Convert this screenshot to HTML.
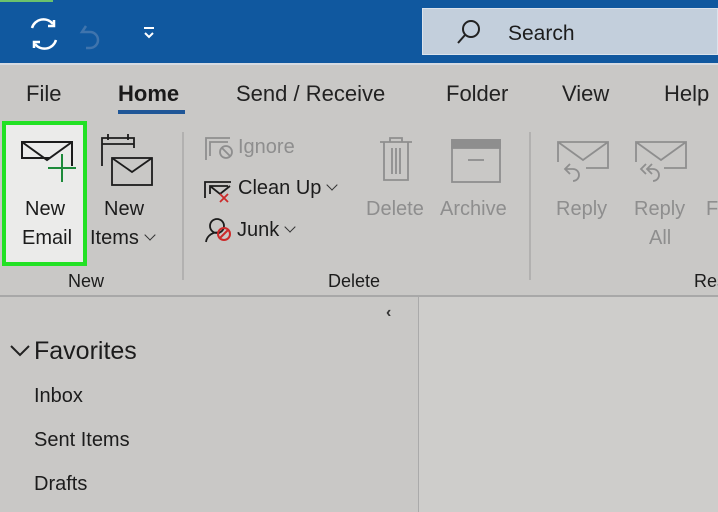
<!DOCTYPE html>
<html><head><style>
body{margin:0;width:718px;height:512px;overflow:hidden;background:#c9c8c6;font-family:"Liberation Sans",sans-serif;position:relative}
.a{position:absolute;white-space:nowrap}
.t{font-size:22px;color:#222}
.r{font-size:20px;color:#1c1c1c}
.g{font-size:20px;color:#8e8e8e}
.c{display:inline-block;width:7px;height:7px;border-right:1.6px solid #333;border-bottom:1.6px solid #333;transform:rotate(45deg);margin-left:7px;vertical-align:5px}
</style></head><body>
<div class="a" style="left:0;top:0;width:718px;height:63px;background:#10589f"></div>
<div class="a" style="left:0;top:0;width:53px;height:2px;background:#6cc26c"></div>
<div class="a" style="left:0;top:63px;width:718px;height:2px;background:#d6dbe2"></div>
<div class="a" style="left:422px;top:8px;width:296px;height:47px;background:#c3cfdc;border:1px solid #dbe3ec;box-sizing:border-box"></div>
<svg class="a" style="left:0;top:0" width="718" height="63">
<g fill="none" stroke="#fff" stroke-width="2.5">
<path d="M32 28a12 12 0 0 1 21-4"/><path d="M56 40a12 12 0 0 1-21 4"/>
<path d="M54 20v6h-6"/><path d="M34 48v-6h6"/>
</g>
<path d="M86 26l-4 6h8a8 8 0 0 1 0 16h-4" fill="none" stroke="#3f74ad" stroke-width="2.5"/>
<path d="M144 28h10M145 33l4 4 4-4" fill="none" stroke="#fff" stroke-width="2"/>
<circle cx="471" cy="29" r="8" fill="none" stroke="#222" stroke-width="2"/>
<path d="M465 35l-7 8" stroke="#222" stroke-width="2"/>
</svg>
<div class="a r" style="left:508px;top:22px;font-size:21px">Search</div>
<div class="a t" style="left:26px;top:81px">File</div>
<div class="a t" style="left:118px;top:81px;font-weight:bold;color:#1a1a1a">Home</div>
<div class="a" style="left:118px;top:110px;width:67px;height:4px;background:#1f5697"></div>
<div class="a t" style="left:236px;top:81px">Send / Receive</div>
<div class="a t" style="left:446px;top:81px">Folder</div>
<div class="a t" style="left:562px;top:81px">View</div>
<div class="a t" style="left:664px;top:81px">Help</div>
<div class="a" style="left:2px;top:121px;width:85px;height:145px;border:4px solid #22e124;box-sizing:border-box;background:#ebebea"></div>
<svg class="a" style="left:0;top:120px" width="718" height="180">
<g fill="none" stroke="#1c1c1c" stroke-width="2">
<path d="M50 38H22V22h50v24M22 22l25 18 25-18"/>
</g>
<path d="M62 34v28M48 48h28" stroke="#1d8a3a" stroke-width="2"/>
<g fill="none" stroke="#1c1c1c" stroke-width="1.8">
<path d="M102 46V18h32v10M102 24h32M108 14v6M128 14v6"/>
<rect x="112" y="38" width="40" height="27"/><path d="M112 38l20 14 20-14"/>
</g>
<path d="M183 12v148" stroke="#9a9a9a"/>
<path d="M530 12v148" stroke="#9a9a9a"/>
<g fill="none" stroke="#8e8e8e" stroke-width="1.8">
<path d="M206 40V18h24M210 36V22h18"/><circle cx="226" cy="32" r="6"/><path d="M222 28l8 8"/>
<path d="M380 22h32M390 22v-4h12v4M384 22v38h24V22M392 28v26M396 28v26M400 28v26"/>
<rect x="452" y="20" width="48" height="42"/><rect x="452" y="20" width="48" height="8" fill="#8e8e8e"/><path d="M468 40h16"/>
<path d="M558 42V22h50v26h-22M558 22l25 18 25-18M570 44l-5 5 5 5M565 49h8a6 6 0 0 1 0 12"/>
<path d="M636 42V22h50v26h-22M636 22l25 18 25-18M646 44l-5 5 5 5M652 44l-5 5 5 5M647 49h6a6 6 0 0 1 0 12"/>
</g>
<g fill="none" stroke="#1c1c1c" stroke-width="1.8">
<path d="M205 78V62h26M210 74V66h18M210 66l10 8 10-8"/>
<circle cx="217" cy="106" r="7"/><path d="M206 122a11 11 0 0 1 14-9"/>
</g>
<path d="M220 74l8 8M228 74l-8 8" stroke="#cc2a2a" stroke-width="1.8"/>
<circle cx="224" cy="114" r="6" fill="none" stroke="#cc2a2a" stroke-width="2"/>
<path d="M220 118l8-8" stroke="#cc2a2a" stroke-width="2"/>
<path d="M0 176H718" stroke="#a8a8a8" stroke-width="2"/>
</svg>
<div class="a r" style="left:25px;top:198px">New</div>
<div class="a r" style="left:22px;top:227px">Email</div>
<div class="a r" style="left:104px;top:198px">New</div>
<div class="a r" style="left:90px;top:227px">Items<span class="c"></span></div>
<div class="a g" style="left:238px;top:136px">Ignore</div>
<div class="a r" style="left:238px;top:177px">Clean Up<span class="c"></span></div>
<div class="a r" style="left:237px;top:219px">Junk<span class="c"></span></div>
<div class="a g" style="left:366px;top:198px">Delete</div>
<div class="a g" style="left:440px;top:198px">Archive</div>
<div class="a g" style="left:556px;top:198px">Reply</div>
<div class="a g" style="left:634px;top:198px">Reply</div>
<div class="a g" style="left:649px;top:227px">All</div>
<div class="a g" style="left:706px;top:198px">F</div>
<div class="a r" style="left:68px;top:271px;font-size:18px">New</div>
<div class="a r" style="left:328px;top:271px;font-size:18px">Delete</div>
<div class="a r" style="left:694px;top:271px;font-size:18px">Res</div>
<div class="a" style="left:418px;top:297px;width:300px;height:215px;background:#cecdcb;border-left:1px solid #aaa"></div>
<div class="a" style="left:386px;top:304px;font-size:16px;color:#333;font-weight:bold">‹</div>
<svg class="a" style="left:10px;top:343px" width="22" height="16"><path d="M1 3l9 9 9-9" fill="none" stroke="#222" stroke-width="2"/></svg>
<div class="a" style="left:34px;top:337px;font-size:25px;color:#1c1c1c">Favorites</div>
<div class="a r" style="left:34px;top:385px">Inbox</div>
<div class="a r" style="left:34px;top:429px">Sent Items</div>
<div class="a r" style="left:34px;top:473px">Drafts</div>
</body></html>
